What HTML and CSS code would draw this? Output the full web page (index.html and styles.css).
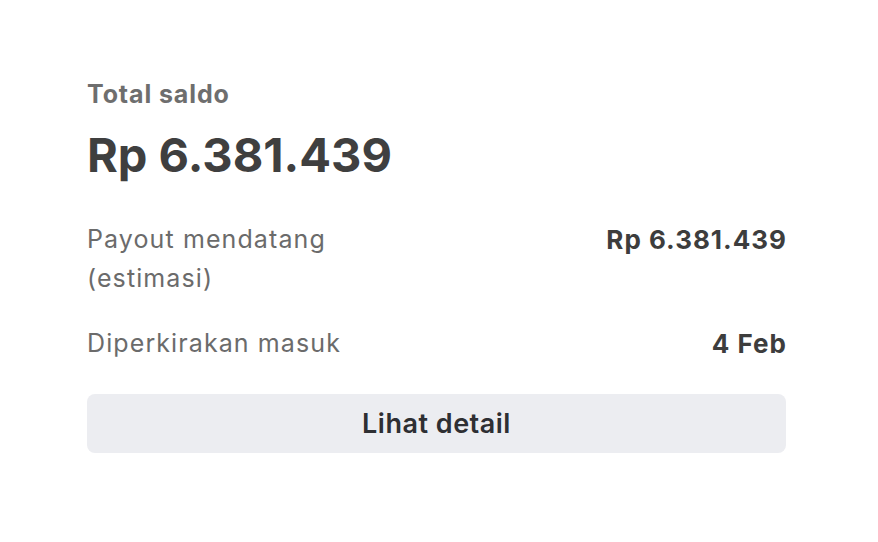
FILE: index.html
```html
<!DOCTYPE html>
<html lang="id">
<head>
    <meta charset="UTF-8">
    <meta name="viewport" content="width=device-width, initial-scale=1.0">
    <title>Total saldo</title>
    <link rel="stylesheet" href="styles.css">
</head>
<body>
    <!-- Balance card -->
    <div class="balance">
        <div class="balance_label">Total saldo</div>
        <div class="balance_amount">Rp 6.381.439</div>

        <!-- Payout rows -->
        <div class="row">
            <div class="row_label">Payout mendatang<br>(estimasi)</div>
            <div class="row_value">Rp 6.381.439</div>
        </div>
        <div class="row">
            <div class="row_label">Diperkirakan masuk</div>
            <div class="row_value">4 Feb</div>
        </div>

        <button class="detail_button">Lihat detail</button>
    </div>
</body>
</html>
```

FILE: styles.css
```css
/* General styles for body */
body {
    margin: 0;
    padding: 0;
    background: #ffffff;
    font-family: 'Inter', 'Liberation Sans', sans-serif;
}

.balance {
    width: 699px;
    padding: 78px 0 0 87px;
}

.balance_label {
    font-size: 25px;
    font-weight: 700;
    color: #6e6e6e;
    line-height: 32px;
    letter-spacing: 0.9px;
}

.balance_amount {
    font-size: 47px;
    font-weight: 700;
    color: #3f3f3f;
    line-height: 56px;
    margin-top: 17px;
    margin-bottom: 37px;
}

.row {
    display: flex;
    justify-content: space-between;
    align-items: flex-start;
    margin-bottom: 26px;
}

.row:last-of-type {
    margin-bottom: 31px;
}

.row_label {
    font-size: 25px;
    color: #6b6b6b;
    line-height: 39px;
    letter-spacing: 1.1px;
}

.row_value {
    font-size: 26px;
    font-weight: 700;
    color: #3d3d3d;
    line-height: 39px;
    letter-spacing: 1px;
    margin-right: -1px; /* trailing letter spacing */
}

.detail_button {
    display: block;
    width: 100%;
    height: 59px;
    border: none;
    border-radius: 8px;
    background-color: #ecedf1;
    color: #2e2f33;
    font-family: inherit;
    font-size: 27px;
    font-weight: 600;
    letter-spacing: 0.5px;
    cursor: pointer;
}
```
